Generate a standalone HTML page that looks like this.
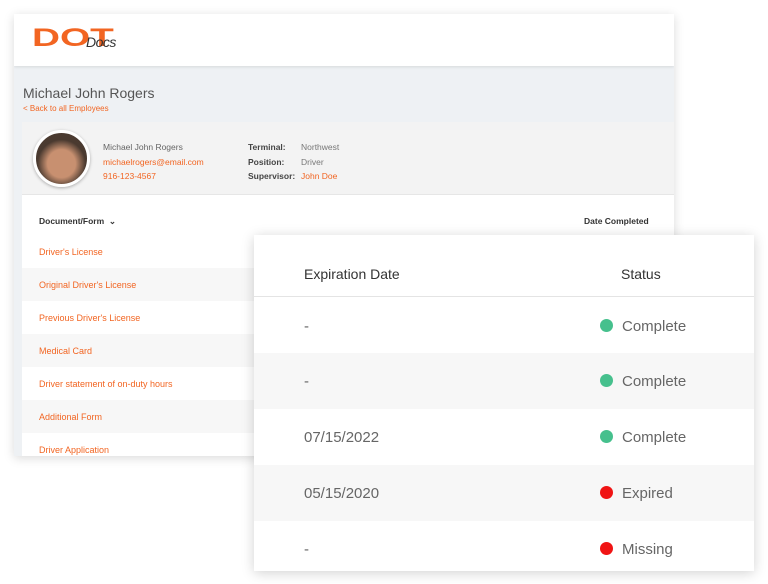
<!DOCTYPE html>
<html><head><style>
*{margin:0;padding:0;box-sizing:border-box}
body{width:768px;height:584px;background:#fff;position:relative;overflow:hidden;font-family:"Liberation Sans",sans-serif}
.main{position:absolute;left:14px;top:14px;width:660px;height:442px;background:#eef1f4;box-shadow:0 2px 10px rgba(0,0,0,.15);overflow:hidden}
.hdr{position:absolute;left:0;top:0;width:660px;height:52px;background:#fff;box-shadow:0 1px 3px rgba(0,0,0,.1)}
.o{color:#f26522}
.abs{position:absolute;white-space:nowrap}
.inner{position:absolute;left:8px;top:108px;width:652px;height:340px;background:#fff}
.prof{position:absolute;left:0;top:0;width:652px;height:73px;background:#f3f3f3;border-bottom:1px solid #e6e6e6}
.row{position:absolute;left:0;width:652px;height:33px;font-size:9px;padding:12px 0 0 17px}
.ov{position:absolute;left:254px;top:235px;width:500px;height:336px;background:#fff;box-shadow:0 2px 12px rgba(0,0,0,.18)}
.orow{position:absolute;left:0;width:500px;height:56px;font-size:15px;color:#666}
.dot{display:inline-block;width:13px;height:13px;border-radius:50%;vertical-align:-1px;margin-right:9px}
</style></head><body>
<div class="main">
 <div class="hdr">
  <div class="abs" style="left:18px;top:13px;font:900 25px/22px 'Liberation Sans',sans-serif;color:#f26522;transform:scaleX(1.55);transform-origin:left">DOT</div>
  <div class="abs" style="left:72px;top:20px;font:italic 14px 'Liberation Sans',sans-serif;color:#333;letter-spacing:-0.5px">Docs</div>
 </div>
 <div class="abs" style="left:9px;top:71px;font-size:14px;color:#555">Michael John Rogers</div>
 <div class="abs o" style="left:9px;top:90px;font-size:8px">&lt; Back to all Employees</div>
 <div class="inner">
  <div class="prof">
   <div class="abs" style="left:11px;top:8px;width:57px;height:57px;border-radius:50%;background:radial-gradient(circle at 50% 60%,#c89070 0 35%,#4a3a30 60%);border:3px solid #fff;box-shadow:0 1px 3px rgba(0,0,0,.3)"></div>
   <div class="abs" style="left:81px;top:18px;font-size:8.5px;color:#666;line-height:14.5px">Michael John Rogers<br><span class="o">michaelrogers@email.com</span><br><span class="o">916-123-4567</span></div>
   <div class="abs" style="left:226px;top:18px;font-size:8.5px;color:#444;font-weight:bold;line-height:14.5px">Terminal:<br>Position:<br>Supervisor:</div>
   <div class="abs" style="left:279px;top:18px;font-size:8.5px;color:#777;line-height:14.5px">Northwest<br>Driver<br><span class="o">John Doe</span></div>
  </div>
  <div class="abs" style="left:17px;top:94px;font-size:8.5px;font-weight:bold;color:#333">Document/Form &nbsp;⌄</div>
  <div class="abs" style="left:562px;top:94px;font-size:8.5px;font-weight:bold;color:#333">Date Completed</div>
  <div class="row o" style="top:113px">Driver's License</div>
  <div class="row o" style="top:146px;background:#f7f7f7">Original Driver's License</div>
  <div class="row o" style="top:179px">Previous Driver's License</div>
  <div class="row o" style="top:212px;background:#f7f7f7">Medical Card</div>
  <div class="row o" style="top:245px">Driver statement of on-duty hours</div>
  <div class="row o" style="top:278px;background:#f7f7f7">Additional Form</div>
  <div class="row o" style="top:311px">Driver Application</div>
 </div>
</div>
<div class="ov">
 <div class="abs" style="left:50px;top:31px;font-size:14px;color:#333">Expiration Date</div>
 <div class="abs" style="left:367px;top:31px;font-size:14px;color:#333">Status</div>
 <div class="abs" style="left:0;top:61px;width:500px;height:1px;background:#e4e4e4"></div>
 <div class="orow" style="top:62px"><span class="abs" style="left:50px;top:21px">-</span><span class="abs" style="left:346px;top:21px"><i class="dot" style="background:#46c08d"></i>Complete</span></div>
 <div class="orow" style="top:118px;background:#f7f7f7"><span class="abs" style="left:50px;top:20px">-</span><span class="abs" style="left:346px;top:20px"><i class="dot" style="background:#46c08d"></i>Complete</span></div>
 <div class="orow" style="top:174px"><span class="abs" style="left:50px;top:20px">07/15/2022</span><span class="abs" style="left:346px;top:20px"><i class="dot" style="background:#46c08d"></i>Complete</span></div>
 <div class="orow" style="top:230px;background:#f7f7f7"><span class="abs" style="left:50px;top:20px">05/15/2020</span><span class="abs" style="left:346px;top:20px"><i class="dot" style="background:#f01414"></i>Expired</span></div>
 <div class="orow" style="top:286px;height:50px"><span class="abs" style="left:50px;top:20px">-</span><span class="abs" style="left:346px;top:20px"><i class="dot" style="background:#f01414"></i>Missing</span></div>
</div>
</body></html>
